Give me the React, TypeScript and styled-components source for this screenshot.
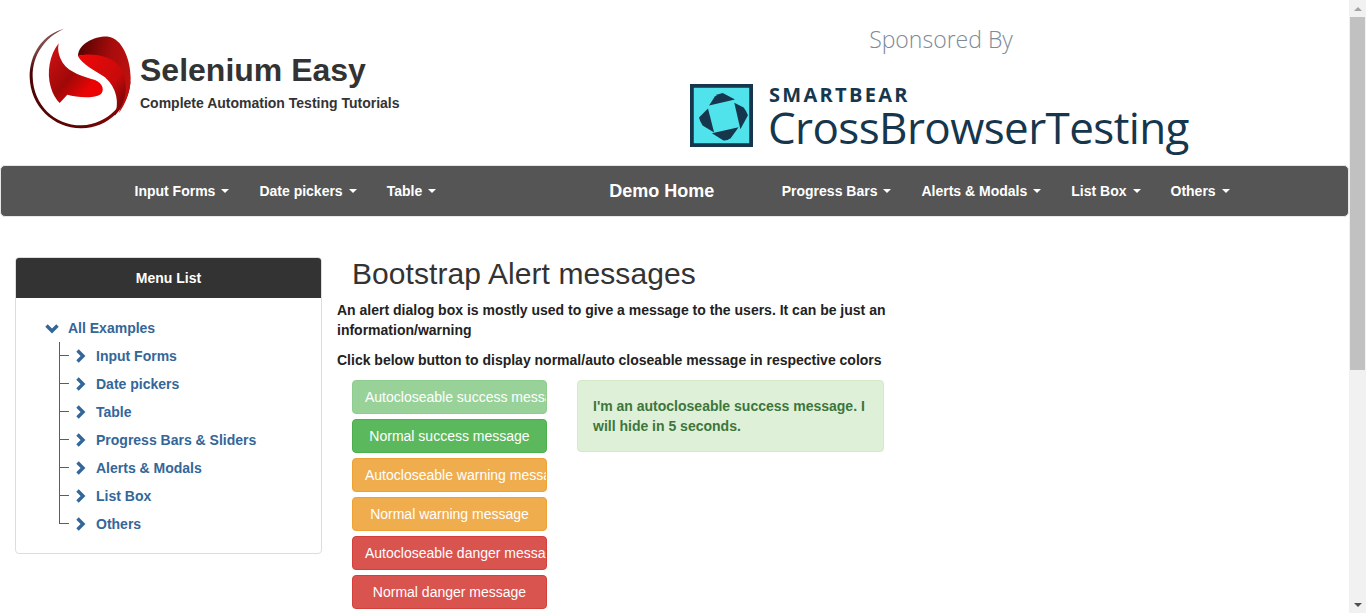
import React from 'react';
import styled, { createGlobalStyle } from 'styled-components';

const GlobalStyle = createGlobalStyle`
    html, body {
        margin: 0;
        padding: 0;
        height: 100%;
        overflow: hidden;
        background: #fff;
    }
    * {
        box-sizing: border-box;
    }
    body {
        font-family: 'Liberation Sans', Arial, sans-serif;
        font-size: 14px;
        line-height: 20px;
        color: #333;
    }
`;

const Frame = styled.div`
    width: 1366px;
    height: 613px;
    display: flex;
    overflow: hidden;
`;

const Page = styled.div`
    width: 1349px;
    flex: none;
`;

const Header = styled.header`
    height: 165px;
    display: flex;
`;

const Brand = styled.div`
    width: 660px;
    padding: 20px 0 0 20px;
    display: flex;
    flex: none;
`;

const BrandText = styled.div`
    padding-top: 28px;
`;

const BrandTitle = styled.h1`
    margin: 0;
    font-size: 32px;
    line-height: 44px;
    font-weight: 700;
    color: #333;
`;

const BrandTagline = styled.div`
    margin-top: 1px;
    font-weight: 700;
`;

const Sponsor = styled.div`
    flex: 1;
    padding: 23px 0 0 30px;
`;

const SponsorTitle = styled.div`
    width: 502px;
    text-align: center;
    font-family: 'Open Sans', sans-serif;
    font-weight: 300;
    font-size: 23px;
    line-height: 33px;
    color: #7d8a99;
`;

const SponsorLogo = styled.div`
    margin-top: 28px;
    display: flex;
    gap: 15px;
    color: #16364d;
`;

const SponsorName = styled.div`
    display: flex;
    flex-direction: column;
`;

const SmartBear = styled.div`
    margin-left: 1px;
    font-family: 'Open Sans', sans-serif;
    font-weight: 700;
    font-size: 20px;
    line-height: 22px;
    letter-spacing: 2.3px;
`;

const ProductName = styled.div`
    font-family: 'Open Sans', sans-serif;
    font-weight: 400;
    font-size: 44px;
    line-height: 42px;
    letter-spacing: -0.6px;
    white-space: nowrap;
`;

const NavBar = styled.nav`
    width: 1349px;
    height: 52px;
    background: #555;
    border: 1px solid #e7e7e7;
    border-radius: 5px;
    padding-left: 118.5px;
    display: flex;
    align-items: center;
`;

const NavItem = styled.a`
    padding: 0 15px;
    color: #fff;
    font-weight: 700;
    line-height: 20px;
    display: flex;
    align-items: center;
    white-space: nowrap;
`;

const Caret = styled.span`
    margin-left: 6px;
    width: 0;
    height: 0;
    border-top: 4px solid #fff;
    border-left: 4px solid transparent;
    border-right: 4px solid transparent;
`;

const DemoHome = styled.a`
    margin: 0 52.5px 0 158px;
    color: #fff;
    font-size: 18px;
    font-weight: 700;
    white-space: nowrap;
`;

const Content = styled.div`
    display: flex;
    padding: 40px 0 0 15px;
`;

const Sidebar = styled.aside`
    width: 307px;
    height: 297px;
    flex: none;
    border: 1px solid #ddd;
    border-radius: 4px;
    overflow: hidden;
`;

const SidebarHead = styled.div`
    height: 40px;
    background: #333;
    color: #fff;
    font-weight: 700;
    display: flex;
    align-items: center;
    justify-content: center;
`;

const Tree = styled.div`
    padding: 16px 0 0 29px;
`;

const TreeRoot = styled.div`
    height: 28px;
    display: flex;
    align-items: center;
    gap: 9px;
`;

const TreeLink = styled.a`
    color: #369;
    font-weight: 700;
    white-space: nowrap;
`;

const TreeBranch = styled.div`
    margin-left: 14px;
`;

const TreeRow = styled.div`
    height: 28px;
    display: flex;
    align-items: center;
`;

const Connector = styled.span<{ $last?: boolean }>`
    width: 11px;
    height: 28px;
    margin-right: 5px;
    flex: none;
    background-image:
        linear-gradient(#369, #369),
        linear-gradient(#369, #369);
    background-repeat: no-repeat;
    background-size: 1px ${(p) => (p.$last ? '14px' : '28px')}, 10px 1px;
    background-position: 0 0, 0 13px;
`;

const ChevronBox = styled.svg`
    flex: none;
    display: block;
`;

const RowLabel = styled(TreeLink)`
    margin-left: 10px;
`;

const Main = styled.main`
    width: 549px;
    padding-left: 15px;
`;

const Title = styled.h2`
    margin: 0 0 0 15px;
    font-size: 30px;
    font-weight: 400;
    line-height: 33px;
    letter-spacing: 0.08px;
    color: #333;
`;

const Lead = styled.p`
    margin: 10px 0 0;
    font-weight: 700;
    color: #222;
    width: 549px;
`;

const Demo = styled.div`
    display: flex;
    margin: 10px 0 0 15px;
    gap: 30px;
    align-items: flex-start;
`;

const Buttons = styled.div`
    width: 195px;
    flex: none;
    display: flex;
    flex-direction: column;
    gap: 5px;
`;

const palette = {
    success: ['#5cb85c', '#4cae4c'],
    warning: ['#f0ad4e', '#eea236'],
    danger: ['#d9534f', '#d43f3a'],
};

type Tone = keyof typeof palette;

const AlertButton = styled.button<{ $tone: Tone; $faded?: boolean }>`
    width: 195px;
    height: 34px;
    padding: 6px 12px;
    font: 400 14px/20px 'Liberation Sans', Arial, sans-serif;
    color: #fff;
    white-space: nowrap;
    overflow: hidden;
    text-align: center;
    border-radius: 4px;
    border: 1px solid ${(p) => palette[p.$tone][1]};
    background: ${(p) => palette[p.$tone][0]};
    opacity: ${(p) => (p.$faded ? 0.62 : 1)};
`;

const SuccessAlert = styled.div`
    width: 307px;
    flex: none;
    padding: 15px;
    background: #dff0d8;
    border: 1px solid #d6e9c6;
    border-radius: 4px;
    color: #3c763d;
    font-weight: 700;
`;

const Scrollbar = styled.div`
    width: 17px;
    height: 613px;
    flex: none;
    background: #f1f1f1;
    display: flex;
    flex-direction: column;
    align-items: center;
`;

const ScrollButton = styled.div`
    height: 17px;
    width: 17px;
    flex: none;
    display: flex;
    align-items: center;
    justify-content: center;
`;

const ScrollThumb = styled.div`
    width: 15px;
    height: 353px;
    background: #c1c1c1;
`;

const ScrollSpace = styled.div`
    flex: 1;
`;

const ScrollArrow = styled.span<{ $down?: boolean }>`
    width: 0;
    height: 0;
    border-left: 4px solid transparent;
    border-right: 4px solid transparent;
    ${(p) => (p.$down ? 'border-top: 4px solid #505050;' : 'border-bottom: 4px solid #a3a3a3;')}
`;

const LogoSvg = styled.svg`
    flex: none;
    display: block;
`;

function SeleniumLogo() {
    return (
        <LogoSvg width="120" height="115" viewBox="0 0 360 345">
            <defs>
                <linearGradient id="ring" x1="0" y1="0" x2="1" y2="1">
                    <stop offset="0" stopColor="#d9c0c0" />
                    <stop offset="0.22" stopColor="#4e0404" />
                    <stop offset="0.75" stopColor="#5e0404" />
                    <stop offset="1" stopColor="#b00808" />
                </linearGradient>
                <linearGradient id="lobeTop" x1="0" y1="0.3" x2="1" y2="0.6">
                    <stop offset="0" stopColor="#5a0303" />
                    <stop offset="0.55" stopColor="#a80c0c" />
                    <stop offset="1" stopColor="#c01010" />
                </linearGradient>
                <linearGradient id="lobeInner" x1="0" y1="0" x2="1" y2="1">
                    <stop offset="0" stopColor="#f00808" />
                    <stop offset="0.6" stopColor="#c80a0a" />
                    <stop offset="1" stopColor="#5a0404" />
                </linearGradient>
                <linearGradient id="lobeLeft" x1="0" y1="0" x2="1" y2="0.9">
                    <stop offset="0" stopColor="#d51216" />
                    <stop offset="0.5" stopColor="#a00808" />
                    <stop offset="0.78" stopColor="#e80505" />
                    <stop offset="1" stopColor="#f00000" />
                </linearGradient>
            </defs>
            <path
                d="M132 26 C70 42 28 100 29 172 C31 258 100 326 185 325 C265 324 328 262 332 180 C318 250 265 313 185 316 C105 317 40 255 38 170 C37 105 75 52 132 26 Z"
                fill="url(#ring)"
            />
            <path
                d="M174 108 C176 70 225 48 265 50 C305 55 332 115 332 175 C331 215 318 250 296 280 C312 240 316 195 300 155 C280 115 215 100 174 108 Z"
                fill="url(#lobeTop)"
            />
            <path
                d="M174 108 C205 98 262 104 290 130 C316 155 324 200 312 240 C304 262 296 274 284 288 C298 250 292 205 255 172 C225 152 185 132 174 108 Z"
                fill="url(#lobeInner)"
            />
            <path
                d="M116 70 C88 105 80 160 92 200 C98 222 108 238 119 249 L142 224 C170 232 215 236 240 224 C255 214 250 190 225 180 C190 168 150 160 128 128 C116 108 112 90 116 70 Z"
                fill="url(#lobeLeft)"
            />
        </LogoSvg>
    );
}

function SmartBearMark() {
    return (
        <LogoSvg width="63" height="63" viewBox="15 15 175 175">
            <rect x="20" y="20" width="165" height="165" fill="#50e3eb" stroke="#16364d" strokeWidth="11" />
            <g fill="#16364d">
                <path d="M68 75 L84 50 Q92 42 106 40 L140 58 Z" />
                <path d="M138 67 L164 80 Q172 90 176 102 L155 141 Z" />
                <path d="M76 152 L150 135 L128 166 Q118 173 108 172 Z" />
                <path d="M65 83 L82 150 L50 130 Q42 118 40 108 Z" />
            </g>
        </LogoSvg>
    );
}

function ChevronRight() {
    return (
        <ChevronBox width="11" height="14" viewBox="0 0 11 14">
            <path d="M2.5 1.5 L8 7 L2.5 12.5" fill="none" stroke="#369" strokeWidth="3.4" />
        </ChevronBox>
    );
}

function ChevronDown() {
    return (
        <ChevronBox width="14" height="11" viewBox="0 0 14 11">
            <path d="M1.5 2.5 L7 8 L12.5 2.5" fill="none" stroke="#369" strokeWidth="3.4" />
        </ChevronBox>
    );
}

const leftNav = ['Input Forms', 'Date pickers', 'Table'];
const rightNav = ['Progress Bars', 'Alerts & Modals', 'List Box', 'Others'];
const treeItems = ['Input Forms', 'Date pickers', 'Table', 'Progress Bars & Sliders', 'Alerts & Modals', 'List Box', 'Others'];

const buttons: { label: string; tone: Tone; faded?: boolean }[] = [
    { label: 'Autocloseable success message', tone: 'success', faded: true },
    { label: 'Normal success message', tone: 'success' },
    { label: 'Autocloseable warning message', tone: 'warning' },
    { label: 'Normal warning message', tone: 'warning' },
    { label: 'Autocloseable danger message', tone: 'danger' },
    { label: 'Normal danger message', tone: 'danger' },
];

export default function App(): JSX.Element {
    return (
        <Frame>
            <GlobalStyle />
            <Page>
                <Header>
                    <Brand>
                        <SeleniumLogo />
                        <BrandText>
                            <BrandTitle>Selenium Easy</BrandTitle>
                            <BrandTagline>Complete Automation Testing Tutorials</BrandTagline>
                        </BrandText>
                    </Brand>
                    <Sponsor>
                        <SponsorTitle>Sponsored By</SponsorTitle>
                        <SponsorLogo>
                            <SmartBearMark />
                            <SponsorName>
                                <SmartBear>SMARTBEAR</SmartBear>
                                <ProductName>CrossBrowserTesting</ProductName>
                            </SponsorName>
                        </SponsorLogo>
                    </Sponsor>
                </Header>

                <NavBar>
                    {leftNav.map((item) => (
                        <NavItem key={item}>
                            {item}
                            <Caret />
                        </NavItem>
                    ))}
                    <DemoHome>Demo Home</DemoHome>
                    {rightNav.map((item) => (
                        <NavItem key={item}>
                            {item}
                            <Caret />
                        </NavItem>
                    ))}
                </NavBar>

                <Content>
                    <Sidebar>
                        <SidebarHead>Menu List</SidebarHead>
                        <Tree>
                            <TreeRoot>
                                <ChevronDown />
                                <TreeLink>All Examples</TreeLink>
                            </TreeRoot>
                            <TreeBranch>
                                {treeItems.map((item, i) => (
                                    <TreeRow key={item}>
                                        <Connector $last={i === treeItems.length - 1} />
                                        <ChevronRight />
                                        <RowLabel>{item}</RowLabel>
                                    </TreeRow>
                                ))}
                            </TreeBranch>
                        </Tree>
                    </Sidebar>

                    <Main>
                        <Title>Bootstrap Alert messages</Title>
                        <Lead>
                            An alert dialog box is mostly used to give a message to the users. It can be just an information/warning
                        </Lead>
                        <Lead>Click below button to display normal/auto closeable message in respective colors</Lead>
                        <Demo>
                            <Buttons>
                                {buttons.map((b) => (
                                    <AlertButton key={b.label} $tone={b.tone} $faded={b.faded}>
                                        {b.label}
                                    </AlertButton>
                                ))}
                            </Buttons>
                            <SuccessAlert>I'm an autocloseable success message. I will hide in 5 seconds.</SuccessAlert>
                        </Demo>
                    </Main>
                </Content>
            </Page>

            <Scrollbar>
                <ScrollButton>
                    <ScrollArrow />
                </ScrollButton>
                <ScrollThumb />
                <ScrollSpace />
                <ScrollButton>
                    <ScrollArrow $down />
                </ScrollButton>
            </Scrollbar>
        </Frame>
    );
}
